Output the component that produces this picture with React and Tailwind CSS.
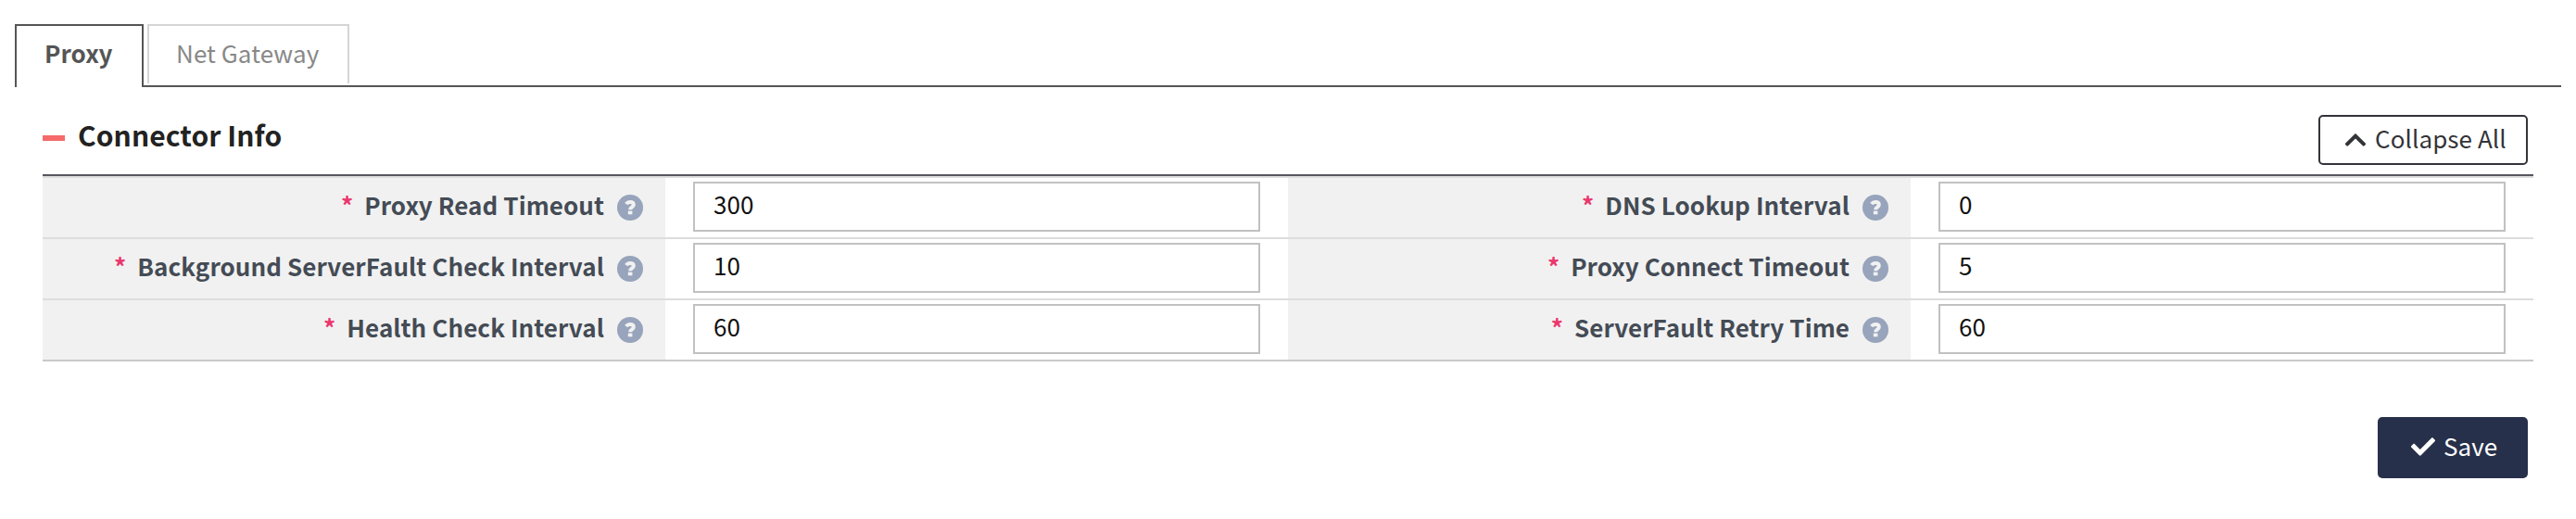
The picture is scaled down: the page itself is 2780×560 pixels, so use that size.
import { FaCheck, FaChevronUp } from "react-icons/fa";

const rows = [
  [["Proxy Read Timeout", "300"], ["DNS Lookup Interval", "0"]],
  [["Background ServerFault Check Interval", "10"], ["Proxy Connect Timeout", "5"]],
  [["Health Check Interval", "60"], ["ServerFault Retry Time", "60"]],
];

function HelpIcon() {
  return (
    <svg viewBox="0 0 28 28" className="ml-3.5 mt-[18px] size-7 shrink-0">
      <circle cx="14" cy="14" r="14" fill="#97a4bb" />
      <path
        d="M9.8 10.1C10.9 8.6 12.2 7.9 14.1 7.9C16.5 7.9 17.8 9.2 17.8 10.9C17.8 13.4 14.1 13.2 14.1 16.3"
        fill="none"
        stroke="#f1f1f1"
        strokeWidth="4"
      />
      <path d="M11.8 17.6h4.6v3.7h-4.6z" fill="#f1f1f1" />
    </svg>
  );
}

function Field({ label, value }) {
  return (
    <>
      <div className="flex w-[672px] items-start justify-end bg-[#f1f1f1] pr-6 font-bold text-[#444b55]">
        <span className="mr-3 mt-2.5 text-[#eb376d]">*</span>
        <span className="mt-2.5">{label}</span>
        <HelpIcon />
      </div>
      <div className="w-[672px] px-[30px] pt-1">
        <input
          defaultValue={value}
          className="block h-[54px] w-full border-2 border-[#c1c1c1] bg-white px-5 pb-2 tracking-[0.08px] text-[#111] outline-none"
        />
      </div>
    </>
  );
}

export default function App() {
  return (
    <div className="h-[560px] w-[2780px] bg-white px-4 pt-[26px] font-['Noto_Sans_CJK_KR','Noto_Sans',sans-serif] text-[26px] leading-[38px] tracking-[0.08px]">
      <div className="flex h-[68px]">
        <div className="w-[137px] border-l-2 border-t-2 border-[#555] pl-[30px] pt-2.5 font-bold text-[#555]">
          Proxy
        </div>
        <div className="flex flex-1 border-b-2 border-l-2 border-[#555] pl-1">
          <div className="h-16 w-[218px] border-2 border-b-0 border-[#d5d5d5] pl-[29px] pt-2.5 text-[#888]">
            Net Gateway
          </div>
        </div>
      </div>
      <div className="pl-[30px] pr-[30px]">
        <div className="flex h-[94px] items-start">
          <div className="mt-[52px] h-1.5 w-6 bg-[#f56a6a]" />
          <h2 className="ml-3.5 mt-[31px] text-[30px] font-bold leading-[40px] text-[#222]">Connector Info</h2>
          <button className="ml-auto mr-1.5 mt-[30px] flex h-[54px] w-[226px] items-start rounded-[5px] border-2 border-[#333438] pl-[25px] text-[#333438]">
            <FaChevronUp className="mt-3 size-[26px]" />
            <span className="ml-2 mt-1 tracking-[0.08px]">Collapse All</span>
          </button>
        </div>
        <div className="border-t-2 border-[#58555e]">
          {rows.map((row, i) => (
            <div key={i} className="flex h-[66px] border-t-2 border-[#ddd]">
              {row.map(([label, value]) => (
                <Field key={label} label={label} value={value} />
              ))}
            </div>
          ))}
          <div className="h-0.5 bg-[#c9c9c9]" />
        </div>
        <div className="flex justify-end pr-1.5 pt-[60px]">
          <button className="flex h-[66px] w-[162px] items-start rounded-[5px] bg-[#27304a] pl-9 text-white">
            <FaCheck className="mt-[19px] size-[26px]" />
            <span className="ml-[9px] mt-3 tracking-[0.08px]">Save</span>
          </button>
        </div>
      </div>
    </div>
  );
}
